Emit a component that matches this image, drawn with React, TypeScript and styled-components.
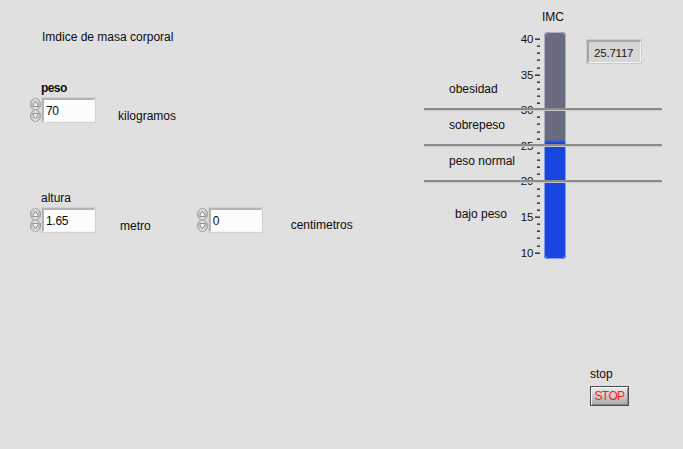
import React from 'react';
import styled, { createGlobalStyle } from 'styled-components';

const GlobalStyle = createGlobalStyle`
  html, body {
    margin: 0;
    padding: 0;
    background: #e0e0e0;
  }
  body {
    font-family: "Liberation Sans", Arial, sans-serif;
  }
`;

const Panel = styled.div`
  position: relative;
  display: flex;
  width: 683px;
  height: 449px;
  overflow: hidden;
  background: #e0e0e0;
  color: #0c0c0c;
  font-size: 12px;
  line-height: 14px;
`;

const LeftPane = styled.div`
  display: flex;
  flex-direction: column;
  width: 390px;
  padding-left: 30px;
`;

const Title = styled.div`
  margin: 30px 0 0 12px;
`;

const FieldLabel = styled.div<{ $gap: number; $bold?: boolean }>`
  margin: ${({ $gap }) => $gap}px 0 0 11px;
  font-weight: ${({ $bold }) => ($bold ? 'bold' : 'normal')};
  letter-spacing: ${({ $bold }) => ($bold ? '-0.6px' : '0')};
`;

const ControlRow = styled.div`
  display: flex;
  align-items: flex-start;
  margin-top: 3px;
`;

const Numeric = styled.div<{ $offset?: number }>`
  display: flex;
  align-items: center;
  gap: 1px;
  margin-left: ${({ $offset }) => $offset ?? 0}px;
`;

const NumBox = styled.div`
  box-sizing: border-box;
  width: 53px;
  height: 24px;
  padding: 4px 0 0 2px;
  background: #fcfcfc;
  border-style: solid;
  border-width: 2px 1px 1px 2px;
  border-color: #b4b4b4 #f4f4f4 #f4f4f4 #b4b4b4;
  box-shadow: 0 0 0 1px #d2d2d2;
  font-size: 12px;
  letter-spacing: -0.3px;
  line-height: 14px;
  color: #0c0c0c;
`;

const Unit = styled.div<{ $left: number; $top: number }>`
  margin: ${({ $top }) => $top}px 0 0 ${({ $left }) => $left}px;
`;

const RightPane = styled.div`
  position: relative;
  display: flex;
  flex-direction: column;
  width: 263px;
`;

const TopRow = styled.div`
  display: flex;
  align-items: flex-start;
`;

const Categories = styled.div`
  display: flex;
  flex-direction: column;
  width: 95px;
  padding-left: 29px;
  box-sizing: border-box;
`;

const Category = styled.div<{ $gap: number; $indent?: number }>`
  margin: ${({ $gap }) => $gap}px 0 0 ${({ $indent }) => $indent ?? 0}px;
  white-space: nowrap;
`;

const GaugeCol = styled.div`
  display: flex;
  flex-direction: column;
  width: 55px;
`;

const GaugeTitle = styled.div`
  margin: 10px 0 0 27px;
`;

const Indicator = styled.div`
  box-sizing: border-box;
  width: 54px;
  height: 23px;
  margin: 40px 0 0 17px;
  padding: 4px 0 0 5px;
  background: #d6d6d6;
  border-style: solid;
  border-width: 2px 1px 1px 2px;
  border-color: #a6a6a6 #f2f2f2 #f2f2f2 #a6a6a6;
  box-shadow: 0 0 0 1px #cbcbcb;
  font-size: 11.5px;
  letter-spacing: -0.2px;
  line-height: 14px;
  color: #1a1a1a;
`;

const StopBlock = styled.div`
  display: flex;
  flex-direction: column;
  align-items: flex-start;
  margin: 103px 0 0 170px;
`;

const StopButton = styled.button`
  box-sizing: border-box;
  width: 39px;
  height: 20px;
  margin-top: 5px;
  padding: 0;
  border: 1px solid #4d4d4d;
  background: linear-gradient(#ececec, #c4c4c4 60%, #a9a9a9);
  box-shadow: inset 1px 1px 0 #fafafa, inset -1px -1px 0 #8a8a8a;
  font-family: "Liberation Sans", Arial, sans-serif;
  font-size: 12px;
  letter-spacing: -0.6px;
  color: #ff1c1c;
  cursor: pointer;
`;

const Divider = styled.div<{ $top: number }>`
  position: absolute;
  left: 4px;
  top: ${({ $top }) => $top}px;
  width: 238px;
  height: 3px;
  background: linear-gradient(#8c8c8c 0 2px, #c9c9c9 2px 3px);
`;

function Spinner() {
  return (
    <svg width="11" height="24" viewBox="0 0 11 24">
      <defs>
        <linearGradient id="spin" x1="0" x2="1" y1="0" y2="0">
          <stop offset="0" stopColor="#b9b9b9" />
          <stop offset="0.5" stopColor="#e6e6e6" />
          <stop offset="1" stopColor="#b0b0b0" />
        </linearGradient>
      </defs>
      <rect x="0.5" y="0.5" width="10" height="11.5" rx="5" fill="url(#spin)" stroke="#a3a3a3" />
      <rect x="0.5" y="12" width="10" height="11.5" rx="5" fill="url(#spin)" stroke="#a3a3a3" />
      <path d="M5.5 3 L8.5 8.5 L2.5 8.5 Z" fill="#f4f4f4" stroke="#8a8a8a" strokeWidth="0.9" />
      <path d="M5.5 21 L8.5 15.5 L2.5 15.5 Z" fill="#f4f4f4" stroke="#8a8a8a" strokeWidth="0.9" />
    </svg>
  );
}

function NumericControl({ value, offset }: { value: string; offset?: number }) {
  return (
    <Numeric $offset={offset}>
      <Spinner />
      <NumBox>{value}</NumBox>
    </Numeric>
  );
}

const yOf = (v: number) => 228.7 - (v - 10) * 7.123;

function Tank({ value }: { value: number }) {
  const ticks = [];
  for (let v = 10; v <= 40; v++) {
    const major = v % 5 === 0;
    const y = Math.round(yOf(v)) - 0.5;
    ticks.push(
      <rect key={v} x={major ? 20 : 22} y={y} width={major ? 5 : 3} height={1.3} fill="#1a1a1a" />
    );
  }
  const labels = [10, 15, 20, 25, 30, 35, 40];
  const level = yOf(value);
  return (
    <svg width="55" height="240" viewBox="0 0 55 240">
      <defs>
        <clipPath id="tankClip">
          <rect x="29" y="8" width="22" height="227" rx="4" />
        </clipPath>
      </defs>
      {ticks}
      {labels.map((v) => (
        <text
          key={v}
          x="18.5"
          y={yOf(v) + 4}
          textAnchor="end"
          fontSize="11.5"
          fontFamily='"Liberation Sans", Arial, sans-serif'
          fill="#111"
        >
          {v}
        </text>
      ))}
      <g clipPath="url(#tankClip)">
        <rect x="29" y="8" width="22" height="227" fill="#696b80" />
        <rect x="29" y={level} width="22" height={235 - level} fill="#1945e1" />
        <rect x="29" y={level} width="22" height="1" fill="#3a64f0" />
      </g>
      <rect x="29.5" y="8.5" width="21" height="226" rx="4" fill="none" stroke="#f2f2f2" strokeOpacity="0.5" />
    </svg>
  );
}

export default function App() {
  const imc = 25.7117;
  return (
    <>
      <GlobalStyle />
      <Panel>
        <LeftPane>
          <Title>Imdice de masa corporal</Title>
          <FieldLabel $gap={37} $bold>
            peso
          </FieldLabel>
          <ControlRow>
            <NumericControl value="70" />
            <Unit $left={23} $top={11}>kilogramos</Unit>
          </ControlRow>
          <FieldLabel $gap={68}>altura</FieldLabel>
          <ControlRow>
            <NumericControl value="1.65" />
            <Unit $left={25} $top={11}>metro</Unit>
            <NumericControl value="0" offset={46} />
            <Unit $left={29} $top={10}>centimetros</Unit>
          </ControlRow>
        </LeftPane>
        <RightPane>
          <TopRow>
            <Categories>
              <Category $gap={82}>obesidad</Category>
              <Category $gap={22}>sobrepeso</Category>
              <Category $gap={22}>peso normal</Category>
              <Category $gap={39} $indent={6}>
                bajo peso
              </Category>
            </Categories>
            <GaugeCol>
              <GaugeTitle>IMC</GaugeTitle>
              <Tank value={imc} />
            </GaugeCol>
            <Indicator>{imc.toFixed(4)}</Indicator>
          </TopRow>
          <StopBlock>
            <span>stop</span>
            <StopButton>STOP</StopButton>
          </StopBlock>
          <Divider $top={108} />
          <Divider $top={144} />
          <Divider $top={180} />
        </RightPane>
      </Panel>
    </>
  );
}
